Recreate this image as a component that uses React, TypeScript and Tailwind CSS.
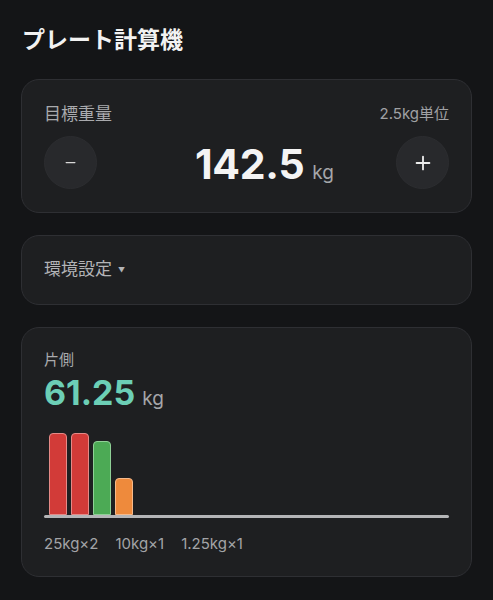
import { Minus, Plus } from 'lucide-react';

const plates = [
  { h: 82, color: 'bg-[#d23b38]', edge: 'border-[#e58a87]' },
  { h: 82, color: 'bg-[#d23b38]', edge: 'border-[#e58a87]' },
  { h: 74, color: 'bg-[#4caa55]', edge: 'border-[#8fd096]' },
  { h: 37, color: 'bg-[#ee8a3c]', edge: 'border-[#f6b98a]' },
];

const summary = ['25kg×2', '10kg×1', '1.25kg×1'];

export default function App() {
  return (
    <div
      className="min-h-[600px] w-full bg-[#141517] px-[21px] pt-[26px] text-white"
      style={{ fontFamily: 'Inter, "Noto Sans CJK JP", sans-serif' }}
    >
      <h1 className="pl-[1px] text-[23px] font-bold leading-[28px] text-[#f2f2f2]">
        プレート計算機
      </h1>

      <section className="mt-[25px] h-[134px] rounded-[18px] border border-[#2e2f33] bg-[#1e1f21] px-[22px] pt-[24px]">
        <div className="flex items-center justify-between">
          <span className="text-[17px] leading-[20px] text-[#a9aaad]">目標重量</span>
          <span className="text-[15px] leading-[20px] text-[#a0a1a4]">2.5kg単位</span>
        </div>
        <div className="mt-[12px] flex items-center justify-between">
          <button className="flex h-[53px] w-[53px] items-center justify-center rounded-full border border-[#2c2d30] bg-[#28292c] text-[#d8d8d8]">
            <Minus size={15} strokeWidth={2} />
          </button>
          <div className="flex items-baseline gap-[8px] pl-[36px] pt-[4px]">
            <span className="text-[41px] font-bold leading-none tracking-[-0.3px] text-[#f4f4f4]">142.5</span>
            <span className="text-[19px] leading-none text-[#a5a6a9]">kg</span>
          </div>
          <button className="flex h-[53px] w-[53px] items-center justify-center rounded-full border border-[#2c2d30] bg-[#28292c] text-[#ececec]">
            <Plus size={22} strokeWidth={2} />
          </button>
        </div>
      </section>

      <section className="mt-[22px] flex h-[70px] items-center rounded-[18px] border border-[#2e2f33] bg-[#1e1f21] px-[22px]">
        <span className="text-[17px] text-[#b3b4b7]">環境設定</span>
        <span className="ml-[6px] mt-[3px] text-[7px] text-[#b3b4b7]">▼</span>
      </section>

      <section className="mt-[22px] h-[250px] rounded-[18px] border border-[#2e2f33] bg-[#1e1f21] px-[22px] pt-[22px]">
        <div className="text-[15px] leading-[20px] text-[#a9aaad]">片側</div>
        <div className="mt-[6px] flex items-baseline gap-[7px]">
          <span className="text-[34px] font-bold leading-none text-[#6ccfb6]">61.25</span>
          <span className="text-[19px] leading-none text-[#a5a6a9]">kg</span>
        </div>

        <div className="mt-[23px] flex h-[82px] items-end gap-[4px] pl-[5px]">
          {plates.map((p, i) => (
            <div
              key={i}
              className={`w-[18px] rounded-t-[4px] border ${p.color} ${p.edge}`}
              style={{ height: p.h }}
            />
          ))}
        </div>
        <div className="h-[3px] w-full rounded-full bg-[#b4b5b7]" />

        <div className="mt-[16px] flex gap-[17px] text-[15px] leading-[20px] text-[#a3a4a7]">
          {summary.map((s) => (
            <span key={s}>{s}</span>
          ))}
        </div>
      </section>
    </div>
  );
}
